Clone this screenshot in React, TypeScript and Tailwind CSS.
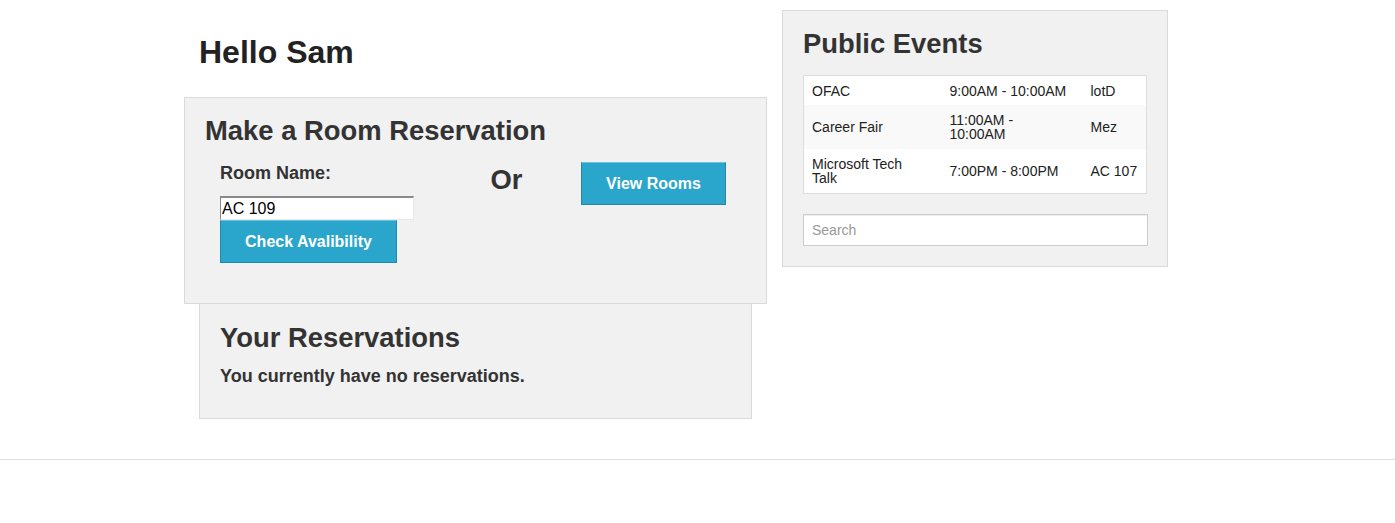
const events = [
  { name: "OFAC", time: "9:00AM - 10:00AM", room: "lotD" },
  { name: "Career Fair", time: "11:00AM - 10:00AM", room: "Mez" },
  { name: "Microsoft Tech Talk", time: "7:00PM - 8:00PM", room: "AC 107" },
];

const App = () => {
  return (
    <div className="min-h-screen bg-white text-[#333] font-['Liberation_Sans',Arial,sans-serif]">
      <div className="flex items-start pl-[184px]">
        {/* Left column */}
        <div className="w-[583px] flex-shrink-0">
          <h1 className="pl-[15px] pt-[35px] text-[32px] leading-[35px] font-bold text-[#222]">Hello Sam</h1>

          {/* Reservation form panel */}
          <div className="mt-[27px] h-[207px] border border-[#dadada] bg-[#f1f1f1] px-[20px] pt-[18px]">
            <h2 className="text-[27.4px] leading-[30px] font-bold">Make a Room Reservation</h2>
            <div className="mt-[17px] flex items-start">
              <div className="ml-[15px] w-[256px]">
                <label className="block text-[18px] leading-[20px] font-bold">Room Name:</label>
                <input
                  defaultValue="AC 109"
                  className="mt-[13px] block w-[194px] h-[24px] bg-white border-l border-r border-b border-t-2 border-t-[#8a8a8a] border-l-[#8a8a8a] border-r-[#e8e8e8] border-b-[#e8e8e8] px-[1px] text-[16px] text-black outline-none"
                />
                <button className="block w-[177px] h-[43px] bg-[#2aa5cb] border border-[#1f88ab] border-t-[#6cc2dd] text-white text-[16px] font-bold">
                  Check Avalibility
                </button>
              </div>
              <div className="mt-[2px] w-[61px] text-center text-[27.4px] leading-[30px] font-bold">Or</div>
              <button className="-mt-px ml-[44px] w-[145px] h-[43px] bg-[#2aa5cb] border border-[#2a86a3] border-t-[#6cc2dd] text-white text-[16px] font-bold">
                View Rooms
              </button>
            </div>
          </div>

          {/* Your reservations panel */}
          <div className="mx-[15px] h-[115px] border border-t-0 border-[#dadada] bg-[#f1f1f1] px-[20px] pt-[19px]">
            <h2 className="text-[27.4px] leading-[30px] font-bold">Your Reservations</h2>
            <p className="mt-[13px] text-[18px] leading-[20px] font-bold">You currently have no reservations.</p>
          </div>
        </div>

        {/* Right column */}
        <div className="ml-[15px] mt-[10px] w-[386px] h-[257px] flex-shrink-0 border border-[#dadada] bg-[#f1f1f1] px-[20px] pt-[18px]">
          <h2 className="text-[27.4px] leading-[30px] font-bold">Public Events</h2>
          <table className="mt-[16px] w-[344px] table-fixed border border-[#ddd] bg-white text-[14px] leading-[14px] text-[#222]">
            <tbody>
              {events.map((e, i) => {
                const py = i === 0 ? "py-[7.5px]" : "py-[8px]";
                return (
                  <tr key={e.name} className={i === 1 ? "bg-[#f9f9f9]" : "bg-white"}>
                    <td className={`w-[138px] pl-[8px] pr-[20px] ${py} align-middle`}>{e.name}</td>
                    <td className={`w-[141px] pl-[8px] pr-[12px] ${py} align-middle`}>{e.time}</td>
                    <td className={`px-[8px] ${py} align-middle whitespace-nowrap`}>{e.room}</td>
                  </tr>
                );
              })}
            </tbody>
          </table>
          <input
            placeholder="Search"
            className="mt-[20px] block w-[345px] h-[32px] border border-[#ccc] bg-white px-[8px] text-[14px] placeholder:text-[#999] shadow-[inset_0_1px_1px_rgba(0,0,0,0.075)] outline-none"
          />
        </div>
      </div>

      {/* Footer divider */}
      <div className="mt-[40px] border-t border-[#ddd] h-[64px]" />
    </div>
  );
};

export default App;
